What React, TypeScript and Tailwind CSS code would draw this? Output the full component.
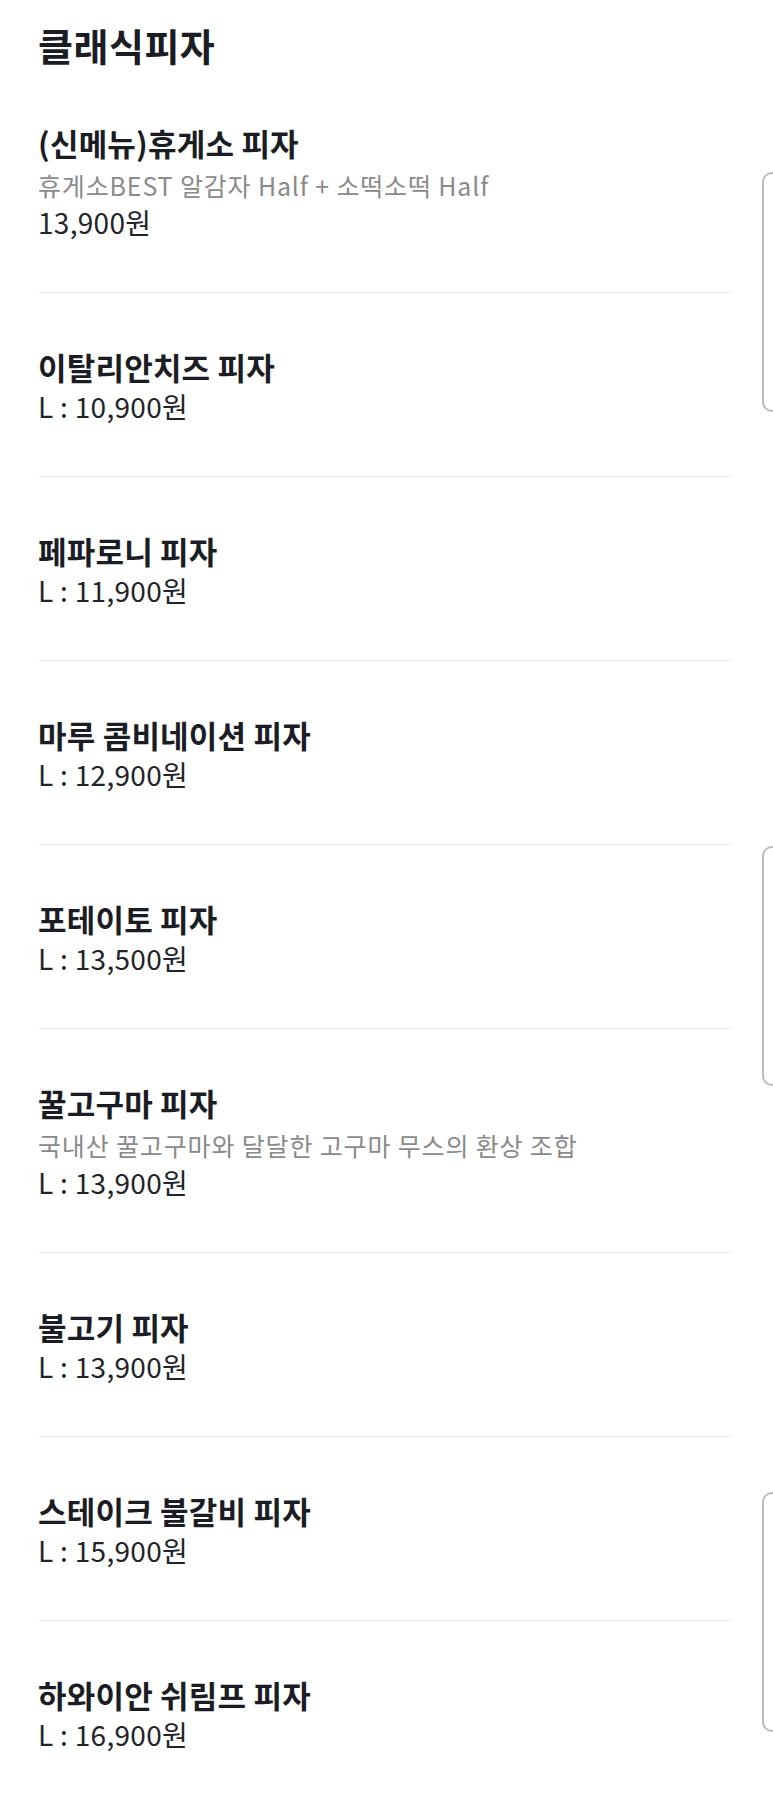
import React from "react";

type Item = { name: string; desc?: string; price: string };

const items: Item[] = [
  { name: "(신메뉴)휴게소 피자", desc: "휴게소BEST 알감자 Half + 소떡소떡 Half", price: "13,900원" },
  { name: "이탈리안치즈 피자", price: "L : 10,900원" },
  { name: "페파로니 피자", price: "L : 11,900원" },
  { name: "마루 콤비네이션 피자", price: "L : 12,900원" },
  { name: "포테이토 피자", price: "L : 13,500원" },
  { name: "꿀고구마 피자", desc: "국내산 꿀고구마와 달달한 고구마 무스의 환상 조합", price: "L : 13,900원" },
  { name: "불고기 피자", price: "L : 13,900원" },
  { name: "스테이크 불갈비 피자", price: "L : 15,900원" },
  { name: "하와이안 쉬림프 피자", price: "L : 16,900원" },
];

export default function App() {
  return (
    <div
      className="w-[773px] h-[1793px] overflow-hidden bg-white flex"
      style={{ fontFamily: '"Noto Sans CJK KR", "Noto Sans", sans-serif' }}
    >
      <div className="w-[733px] shrink-0 pl-[38px]">
        <h1 className="mt-[21px] text-[38px] leading-[48px] font-bold text-[#1b1d24] tracking-[0.5px]">클래식피자</h1>
        {items.map((it, i) => (
          <div key={i} className="ml-[1px] pt-[54px] pb-[52px] border-b border-[#ececec] last:border-b-0">
            <div className="-ml-[1px] text-[31px] leading-[40px] font-bold text-[#1b1d24] tracking-[0.2px]">{it.name}</div>
            {it.desc && (
              <div className="-ml-[1px] mt-[4px] text-[25px] leading-[36px] text-[#8a8a8a] tracking-[0.85px]">{it.desc}</div>
            )}
            <div className="-ml-[1px] mt-[1px] text-[28px] leading-[36px] text-[#222429] tracking-[0.3px]">{it.price}</div>
          </div>
        ))}
      </div>
      <div className="ml-[29px] w-[40px] shrink-0 flex flex-col">
        <div className="mt-[172px] h-[240px] w-[40px] rounded-[10px] border-2 border-[#bdbdbd]" />
        <div className="mt-[434px] h-[240px] w-[40px] rounded-[10px] border-2 border-[#bdbdbd]" />
        <div className="mt-[406px] h-[240px] w-[40px] rounded-[10px] border-2 border-[#bdbdbd]" />
      </div>
    </div>
  );
}
